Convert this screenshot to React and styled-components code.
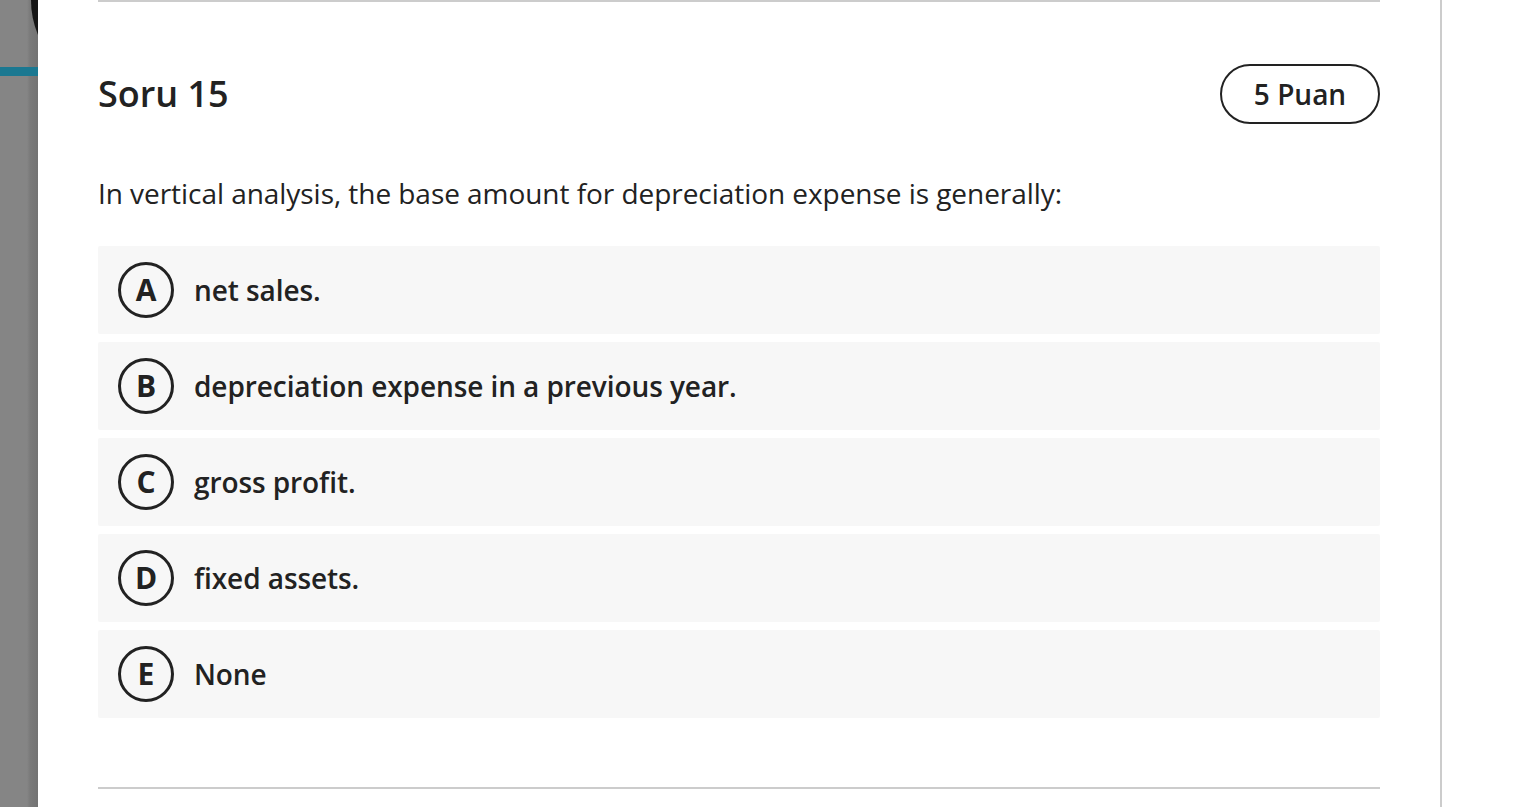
import React from "react";
import styled, { createGlobalStyle } from "styled-components";

const GlobalStyle = createGlobalStyle`
  html, body {
    margin: 0;
    padding: 0;
    background: #ffffff;
    font-family: "Open Sans", "Noto Sans", sans-serif;
    color: #222222;
  }
`;

const Page = styled.div`
  display: flex;
  width: 1539px;
  height: 807px;
  overflow: hidden;
`;

const SideStrip = styled.div`
  position: relative;
  width: 38px;
  flex-shrink: 0;
  overflow: hidden;
  background: linear-gradient(to right, #858585 0, #858585 27px, #7a7a7a 30px, #737373 38px);
`;

const DarkKnob = styled.div`
  position: absolute;
  left: 31px;
  top: -91px;
  width: 182px;
  height: 182px;
  border-radius: 50%;
  background: #151515;
`;

const TealMark = styled.div`
  position: absolute;
  left: 0;
  top: 67px;
  width: 38px;
  height: 9px;
  background: #1b7891;
`;

const Panel = styled.main`
  width: 1404px;
  flex-shrink: 0;
  box-sizing: border-box;
  padding: 0 60px;
  border-right: 2px solid #cccccc;
  background: #ffffff;
`;

const Divider = styled.hr`
  margin: 0;
  border: none;
  height: 2px;
  background: #cccccc;
`;

const Question = styled.section`
  display: flex;
  flex-direction: column;
  padding: 62px 0 69px;
`;

const Header = styled.div`
  display: flex;
  align-items: center;
  justify-content: space-between;
  height: 60px;
`;

const Title = styled.h2`
  margin: 0;
  font-size: 36px;
  font-weight: 600;
  line-height: 1;
  color: #222222;
`;

const Points = styled.div`
  display: flex;
  align-items: center;
  justify-content: center;
  box-sizing: border-box;
  width: 160px;
  height: 60px;
  border: 2px solid #222222;
  border-radius: 30px;
  font-size: 28px;
  font-weight: 600;
  color: #222222;
`;

const Prompt = styled.p`
  margin: 49px 0 33px;
  font-size: 28px;
  line-height: 40px;
  font-weight: 400;
  letter-spacing: -0.05px;
  color: #222222;
`;

const Options = styled.div`
  display: flex;
  flex-direction: column;
  gap: 8px;
`;

const Option = styled.div`
  display: flex;
  align-items: center;
  gap: 20px;
  height: 88px;
  padding-left: 20px;
  border-radius: 2px;
  background: #f7f7f7;
`;

const Letter = styled.span`
  display: flex;
  align-items: center;
  justify-content: center;
  box-sizing: border-box;
  width: 56px;
  height: 56px;
  border: 3px solid #222222;
  border-radius: 50%;
  font-size: 30px;
  font-weight: 700;
  line-height: 1;
  color: #222222;
`;

const OptionText = styled.span`
  font-size: 28px;
  font-weight: 600;
  letter-spacing: -0.08px;
  color: #222222;
`;

const choices = [
  { key: "A", text: "net sales." },
  { key: "B", text: "depreciation expense in a previous year." },
  { key: "C", text: "gross profit." },
  { key: "D", text: "fixed assets." },
  { key: "E", text: "None" }
];

export default function App() {
  return (
    <Page>
      <GlobalStyle />
      <SideStrip>
        <DarkKnob />
        <TealMark />
      </SideStrip>
      <Panel>
        <Divider />
        <Question>
          <Header>
            <Title>Soru 15</Title>
            <Points>5 Puan</Points>
          </Header>
          <Prompt>
            In vertical analysis, the base amount for depreciation expense is generally:
          </Prompt>
          <Options>
            {choices.map(choice => (
              <Option key={choice.key}>
                <Letter>{choice.key}</Letter>
                <OptionText>{choice.text}</OptionText>
              </Option>
            ))}
          </Options>
        </Question>
        <Divider />
      </Panel>
    </Page>
  );
}
